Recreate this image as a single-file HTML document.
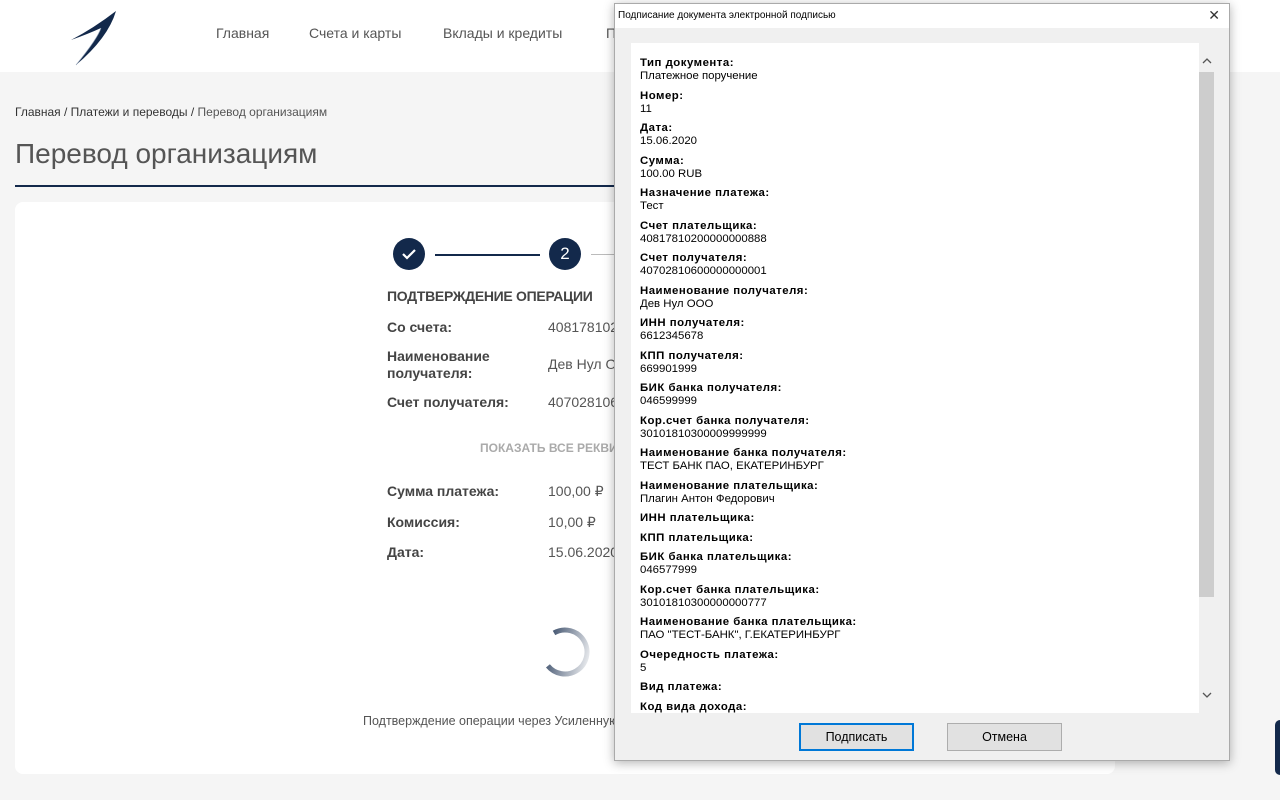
<!DOCTYPE html>
<html><head><meta charset="utf-8"><style>
*{margin:0;padding:0;box-sizing:border-box}
body{width:1280px;height:800px;overflow:hidden;background:#f5f5f5;font-family:"Liberation Sans","Noto Sans CJK JP",sans-serif;position:relative;color:#333}
.hdr{position:absolute;left:0;top:0;width:1280px;height:72px;background:#fff}
.nav{position:absolute;top:25px;font-size:14px;color:#555}
.a{position:absolute}
.card{position:absolute;left:15px;top:202px;width:1100px;height:572px;background:#fff;border-radius:8px}
.lbl{position:absolute;left:387px;font-size:14px;font-weight:bold;color:#444}
.val{position:absolute;left:548px;font-size:14px;color:#555}
.dlg{position:absolute;left:614px;top:3px;width:616px;height:758px;background:#f0f0f0;border:1px solid #aaa;box-shadow:0 2px 10px rgba(0,0,0,.3)}
.tb{position:absolute;left:0;top:0;width:614px;height:24px;background:#fff;font-size:10px;color:#000;padding:6px 0 0 3px}
.cont{position:absolute;left:16px;top:39px;width:568px;height:670px;background:#fff;overflow:hidden;font-size:11.4px;color:#000;line-height:13px;padding:14px 0 0 9px}
.cont b{display:block;letter-spacing:.5px}
.cont div{margin-bottom:6.5px}
.btn{position:absolute;top:719px;height:28px;width:115px;background:#e1e1e1;border:1px solid #adadad;font-size:12.5px;text-align:center;line-height:26px;color:#000}
</style></head><body>
<div class="hdr">
<svg class="a" style="left:68px;top:8px" width="50" height="58" viewBox="0 0 50 58"><path d="M3 32 Q26 20 48 3 Q40 30 8 57 Q30 30 33 20 Q20 26 3 32Z" fill="#13294b"/><path d="M8 57 Q30 30 33 20" stroke="#8a9ab0" stroke-width="0.6" fill="none"/></svg>
<div class="nav" style="left:216px">Главная</div>
<div class="nav" style="left:309px">Счета и карты</div>
<div class="nav" style="left:443px">Вклады и кредиты</div>
<div class="nav" style="left:606px">П</div>
</div>
<div class="a" style="left:15px;top:105px;font-size:12px;color:#333">Главная / Платежи и переводы / <span style="color:#555">Перевод организациям</span></div>
<div class="a" style="left:15px;top:138px;font-size:28px;color:#555">Перевод организациям</div>
<div class="a" style="left:15px;top:185px;width:600px;height:2px;background:#13294b"></div>
<div class="card"></div>
<div class="a" style="left:393px;top:238px;width:32px;height:32px;border-radius:50%;background:#13294b"></div>
<svg class="a" style="left:401px;top:247px" width="16" height="14"><path d="M2 7 L6 11 L14 3" stroke="#fff" stroke-width="2.2" fill="none"/></svg>
<div class="a" style="left:435px;top:254px;width:105px;height:2px;background:#13294b"></div>
<div class="a" style="left:549px;top:238px;width:32px;height:32px;border-radius:50%;background:#13294b;color:#fff;font-size:17px;text-align:center;line-height:32px">2</div>
<div class="a" style="left:591px;top:254px;width:25px;height:1px;background:#bbb"></div>
<div class="a" style="left:387px;top:288px;font-size:14px;color:#444;font-weight:bold;letter-spacing:-.3px">ПОДТВЕРЖДЕНИЕ ОПЕРАЦИИ</div>
<div class="lbl" style="top:319px">Со счета:</div><div class="val" style="top:319px">40817810200000000888</div>
<div class="lbl" style="top:348px;line-height:17px">Наименование<br>получателя:</div><div class="val" style="top:356px">Дев Нул ООО</div>
<div class="lbl" style="top:394px">Счет получателя:</div><div class="val" style="top:394px">40702810600000000001</div>
<div class="a" style="left:480px;top:441px;font-size:12px;font-weight:bold;color:#aaa">ПОКАЗАТЬ ВСЕ РЕКВИЗИТЫ</div>
<div class="lbl" style="top:483px">Сумма платежа:</div><div class="val" style="top:483px">100,00 ₽</div>
<div class="lbl" style="top:514px">Комиссия:</div><div class="val" style="top:514px">10,00 ₽</div>
<div class="lbl" style="top:544px">Дата:</div><div class="val" style="top:544px">15.06.2020</div>
<svg class="a" style="left:539px;top:626px" width="52" height="52"><defs><linearGradient id="g" x1="1" y1="0" x2="0" y2="1"><stop offset="0" stop-color="#13294b"/><stop offset="1" stop-color="#13294b" stop-opacity="0"/></linearGradient></defs><circle cx="26" cy="26" r="22" stroke="url(#g)" stroke-width="5" fill="none" stroke-dasharray="100 200" transform="rotate(-120 26 26)"/></svg>
<div class="a" style="left:363px;top:714px;font-size:12.5px;color:#555">Подтверждение операции через Усиленную</div>
<div class="a" style="left:1275px;top:720px;width:10px;height:55px;background:#13294b;border-radius:6px"></div>
<div class="dlg">
<div class="tb">Подписание документа электронной подписью<span style="position:absolute;right:9px;top:3px;font-size:14px;font-weight:normal;color:#333">✕</span></div>
<div class="cont">
<div><b>Тип документа:</b>Платежное поручение</div>
<div><b>Номер:</b>11</div>
<div><b>Дата:</b>15.06.2020</div>
<div><b>Сумма:</b>100.00 RUB</div>
<div><b>Назначение платежа:</b>Тест</div>
<div><b>Счет плательщика:</b>40817810200000000888</div>
<div><b>Счет получателя:</b>40702810600000000001</div>
<div><b>Наименование получателя:</b>Дев Нул ООО</div>
<div><b>ИНН получателя:</b>6612345678</div>
<div><b>КПП получателя:</b>669901999</div>
<div><b>БИК банка получателя:</b>046599999</div>
<div><b>Кор.счет банка получателя:</b>30101810300009999999</div>
<div><b>Наименование банка получателя:</b>ТЕСТ БАНК ПАО, ЕКАТЕРИНБУРГ</div>
<div><b>Наименование плательщика:</b>Плагин Антон Федорович</div>
<div><b>ИНН плательщика:</b></div>
<div><b>КПП плательщика:</b></div>
<div><b>БИК банка плательщика:</b>046577999</div>
<div><b>Кор.счет банка плательщика:</b>30101810300000000777</div>
<div><b>Наименование банка плательщика:</b>ПАО "ТЕСТ-БАНК", Г.ЕКАТЕРИНБУРГ</div>
<div><b>Очередность платежа:</b>5</div>
<div><b>Вид платежа:</b></div>
<div><b>Код вида дохода:</b></div>
</div>
<div class="a" style="left:584px;top:39px;width:15px;height:670px;background:#f0f0f0"></div>
<div class="a" style="left:584px;top:68px;width:15px;height:525px;background:#cdcdcd"></div>
<svg class="a" style="left:587px;top:53px" width="10" height="8"><path d="M1 6 L5 2 L9 6" stroke="#555" stroke-width="1.3" fill="none"/></svg>
<svg class="a" style="left:587px;top:687px" width="10" height="8"><path d="M1 2 L5 6 L9 2" stroke="#555" stroke-width="1.3" fill="none"/></svg>
<div class="btn" style="left:184px;border:2px solid #0078d7;line-height:24px">Подписать</div>
<div class="btn" style="left:332px">Отмена</div>
</div>
</body></html>
